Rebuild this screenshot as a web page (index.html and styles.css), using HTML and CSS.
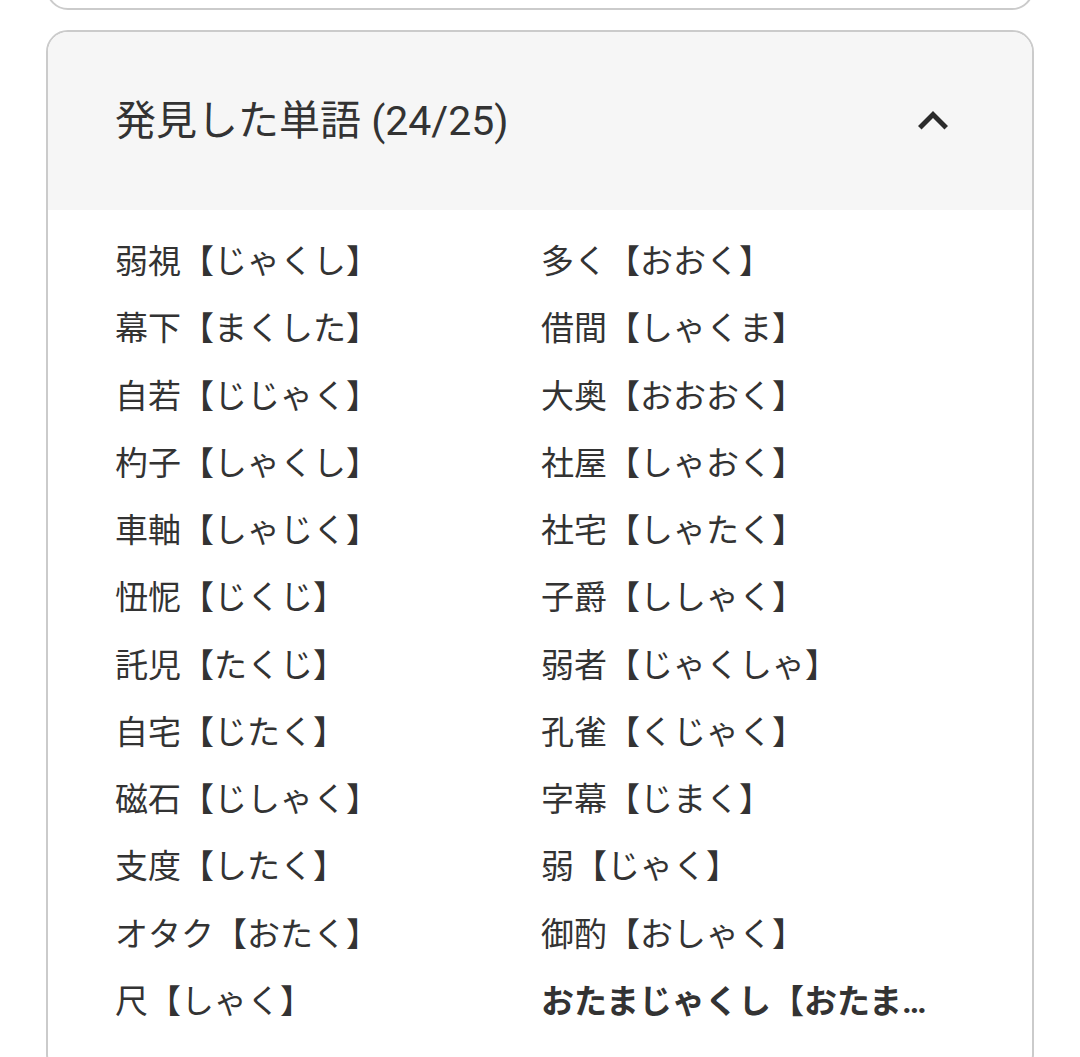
FILE: index.html
```html
<!DOCTYPE html>
<html lang="ja">
<head>
<meta charset="utf-8">
<title>発見した単語</title>
<link rel="stylesheet" href="styles.css">
</head>
<body>
<div class="page">
  <div class="card card-prev"></div>
  <section class="card accordion">
    <div class="acc-header">
      <h2 class="acc-title">発見した単語 (24/25)</h2>
      <svg class="chevron" viewBox="0 0 24 24" width="60" height="60" aria-hidden="true"><path d="M12 8l-6 6 1.41 1.41L12 10.83l4.59 4.58L18 14z"/></svg>
    </div>
    <ul class="word-list">
      <li class="word">弱視【じゃくし】</li>
      <li class="word">幕下【まくした】</li>
      <li class="word">自若【じじゃく】</li>
      <li class="word">杓子【しゃくし】</li>
      <li class="word">車軸【しゃじく】</li>
      <li class="word">忸怩【じくじ】</li>
      <li class="word">託児【たくじ】</li>
      <li class="word">自宅【じたく】</li>
      <li class="word">磁石【じしゃく】</li>
      <li class="word">支度【したく】</li>
      <li class="word">オタク【おたく】</li>
      <li class="word">尺【しゃく】</li>
      <li class="word">多く【おおく】</li>
      <li class="word">借間【しゃくま】</li>
      <li class="word">大奥【おおおく】</li>
      <li class="word">社屋【しゃおく】</li>
      <li class="word">社宅【しゃたく】</li>
      <li class="word">子爵【ししゃく】</li>
      <li class="word">弱者【じゃくしゃ】</li>
      <li class="word">孔雀【くじゃく】</li>
      <li class="word">字幕【じまく】</li>
      <li class="word">弱【じゃく】</li>
      <li class="word">御酌【おしゃく】</li>
      <li class="word word-main">おたまじゃくし【おたまじゃくし】</li>
    </ul>
  </section>
</div>
</body>
</html>
```

FILE: styles.css
```css
html, body {
  margin: 0;
  padding: 0;
  background: #ffffff;
}

body {
  font-family: Roboto, "Noto Sans CJK JP", "Noto Sans", sans-serif;
  color: #333333;
}

.page {
  padding: 0 46px;
  display: flex;
  flex-direction: column;
  gap: 20px;
}

.card {
  border: 2px solid #cbcbcb;
  border-radius: 22px;
  background: #ffffff;
  overflow: hidden;
}

.card-prev {
  height: 60px;
  margin-top: -54px;
}

.acc-header {
  height: 178px;
  background: #f6f6f6;
  display: flex;
  align-items: center;
  justify-content: space-between;
  padding: 0 69px 0 67px;
}

.acc-title {
  margin: 0;
  padding-bottom: 8px;
  font-size: 41px;
  font-weight: 400;
  color: #333333;
  letter-spacing: 0;
}

.chevron {
  display: block;
  fill: #2b2b2b;
  flex: none;
}

.word-list {
  list-style: none;
  margin: 0;
  padding: 18px 65px 40px 67px;
  display: grid;
  grid-template-columns: 1fr 1fr;
  grid-template-rows: repeat(12, 67.27px);
  grid-auto-flow: column;
}

.word {
  font-size: 33px;
  line-height: 67.27px;
  white-space: nowrap;
  overflow: hidden;
  text-overflow: ellipsis;
  padding-right: 32px;
  min-width: 0;
}

.word-main {
  font-weight: 700;
}
```
